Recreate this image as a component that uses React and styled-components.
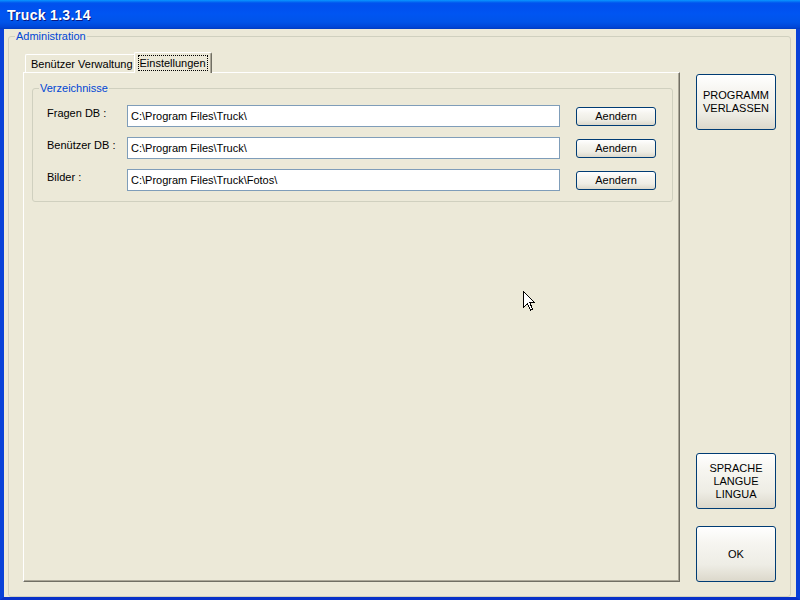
import styled, { createGlobalStyle } from 'styled-components';

const GlobalStyle = createGlobalStyle`
  html, body {
    margin: 0;
    padding: 0;
    background: #0a246a;
  }
  body {
    font-family: 'Liberation Sans', Arial, sans-serif;
    font-size: 11px;
    color: #000;
  }
`;

const Window = styled.div`
  position: relative;
  width: 800px;
  height: 600px;
  display: flex;
  flex-direction: column;
  overflow: hidden;
`;

const TitleBar = styled.div`
  height: 29px;
  display: flex;
  align-items: center;
  padding-left: 7px;
  background: linear-gradient(
    to bottom,
    #0997ff 0px,
    #0053ee 3px,
    #0050ee 6px,
    #0055f2 14px,
    #0054e9 22px,
    #0046d8 27px,
    #003cc0 29px
  );
  box-sizing: border-box;
`;

const Title = styled.span`
  font-family: 'Liberation Sans', Arial, sans-serif;
  font-weight: bold;
  font-size: 14px;
  color: #fff;
  text-shadow: 1px 1px 0 #0a1883;
  letter-spacing: 0.3px;
`;

const Body = styled.div`
  flex: 1;
  display: flex;
  background: #ece9d8;
  border-left: 4px solid #0841d8;
  border-right: 4px solid #0841d8;
  border-bottom: 3px solid #0831c9;
  padding: 7px 5px 0 4px;
  min-height: 0;
`;

const GroupBox = styled.div`
  position: relative;
  border: 1px solid #d0d0bf;
  border-radius: 3px;
  box-sizing: border-box;
`;

const Legend = styled.span`
  position: absolute;
  top: -8px;
  left: ${(p) => p.$left || 6}px;
  padding: 0 1px;
  background: #ece9d8;
  color: #0046d5;
  line-height: 14px;
`;

const AdminBox = styled(GroupBox)`
  flex: 1;
  display: flex;
  gap: 16px;
  padding: 15px 14px 14px 14px;
`;

const TabControl = styled.div`
  flex: 1;
  display: flex;
  flex-direction: column;
`;

const TabStrip = styled.div`
  height: 20px;
  display: flex;
  align-items: flex-end;
  padding-left: 2px;
  position: relative;
  z-index: 1;
`;

const Tab = styled.div`
  box-sizing: border-box;
  height: ${(p) => (p.$active ? 21 : 18)}px;
  margin: ${(p) => (p.$active ? '0 -2px -1px -2px' : '0')};
  padding: ${(p) => (p.$active ? '3px 4px 0 4px' : '2px 2px 0 5px')};
  background: #ece9d8;
  border-top: 1px solid #fff;
  border-left: 1px solid #fff;
  border-right: 1px solid #716f64;
  box-shadow: inset -1px 0 0 #aca899;
  border-radius: 2px 2px 0 0;
  white-space: nowrap;
  line-height: 14px;
`;

const FocusLabel = styled.span`
  display: inline-block;
  padding: 0 1px;
  outline: 1px dotted #000;
  outline-offset: 0;
  line-height: 14px;
`;

const TabPage = styled.div`
  flex: 1;
  box-sizing: border-box;
  border-top: 1px solid #fff;
  border-left: 1px solid #fff;
  border-right: 1px solid #716f64;
  border-bottom: 1px solid #716f64;
  box-shadow: inset -1px -1px 0 #aca899;
  padding: 15px 6px 0 8px;
`;

const DirBox = styled(GroupBox)`
  display: flex;
  flex-direction: column;
  gap: 10px;
  padding: 16px 16px 10px 14px;
`;

const Row = styled.div`
  display: flex;
  align-items: center;
  height: 22px;
`;

const FieldLabel = styled.span`
  width: 80px;
  align-self: flex-start;
  padding-top: 1px;
  line-height: 14px;
`;

const TextBox = styled.div`
  width: 433px;
  height: 22px;
  box-sizing: border-box;
  border: 1px solid #7f9db9;
  background: #fff;
  padding: 3px 3px 0 3px;
  line-height: 14px;
  white-space: nowrap;
  overflow: hidden;
`;

const XpButton = styled.button`
  box-sizing: border-box;
  font-family: 'Liberation Sans', Arial, sans-serif;
  font-size: 11px;
  color: #000;
  border: 1px solid #003c74;
  border-radius: 3px;
  background: linear-gradient(
    to bottom,
    #ffffff 0%,
    #f6f5f0 30%,
    #eeede5 70%,
    #dcd8cb 100%
  );
  padding: 0;
  line-height: 13px;
  cursor: default;
`;

const SmallButton = styled(XpButton)`
  width: 80px;
  height: 19px;
  margin-left: 16px;
`;

const SideColumn = styled.div`
  width: 80px;
  display: flex;
  flex-direction: column;
`;

const SideButton = styled(XpButton)`
  width: 80px;
  height: 56px;
  margin-top: ${(p) => p.$top || 0}px;
`;

const Spacer = styled.div`
  flex: 1;
`;

const Pointer = styled.svg`
  position: absolute;
  left: 523px;
  top: 291px;
  width: 13px;
  height: 20px;
`;

const dirs = [
  { label: 'Fragen DB :', path: 'C:\\Program Files\\Truck\\' },
  { label: 'Benützer DB :', path: 'C:\\Program Files\\Truck\\' },
  { label: 'Bilder :', path: 'C:\\Program Files\\Truck\\Fotos\\' },
];

const App = () => {
  return (
    <>
      <GlobalStyle />
      <Window>
        <TitleBar>
          <Title>Truck 1.3.14</Title>
        </TitleBar>
        <Body>
          <AdminBox>
            <Legend $left={6}>Administration</Legend>
            <TabControl>
              <TabStrip>
                <Tab>Benützer Verwaltung</Tab>
                <Tab $active>
                  <FocusLabel>Einstellungen</FocusLabel>
                </Tab>
              </TabStrip>
              <TabPage>
                <DirBox>
                  <Legend $left={6}>Verzeichnisse</Legend>
                  {dirs.map((d) => (
                    <Row key={d.label}>
                      <FieldLabel>{d.label}</FieldLabel>
                      <TextBox>{d.path}</TextBox>
                      <SmallButton>Aendern</SmallButton>
                    </Row>
                  ))}
                </DirBox>
              </TabPage>
            </TabControl>
            <SideColumn>
              <SideButton $top={22}>
                PROGRAMM
                <br />
                VERLASSEN
              </SideButton>
              <Spacer />
              <SideButton>
                SPRACHE
                <br />
                LANGUE
                <br />
                LINGUA
              </SideButton>
              <SideButton $top={17}>OK</SideButton>
            </SideColumn>
          </AdminBox>
        </Body>
        <Pointer viewBox="0 0 13 20">
          <path
            d="M0.5 0.5 L0.5 16.5 L4.5 12.5 L7.5 19 L9.5 18 L6.8 11.5 L11.5 11.5 Z"
            fill="#fff"
            stroke="#000"
            strokeWidth="1"
            shapeRendering="crispEdges"
          />
        </Pointer>
      </Window>
    </>
  );
};

export default App;
